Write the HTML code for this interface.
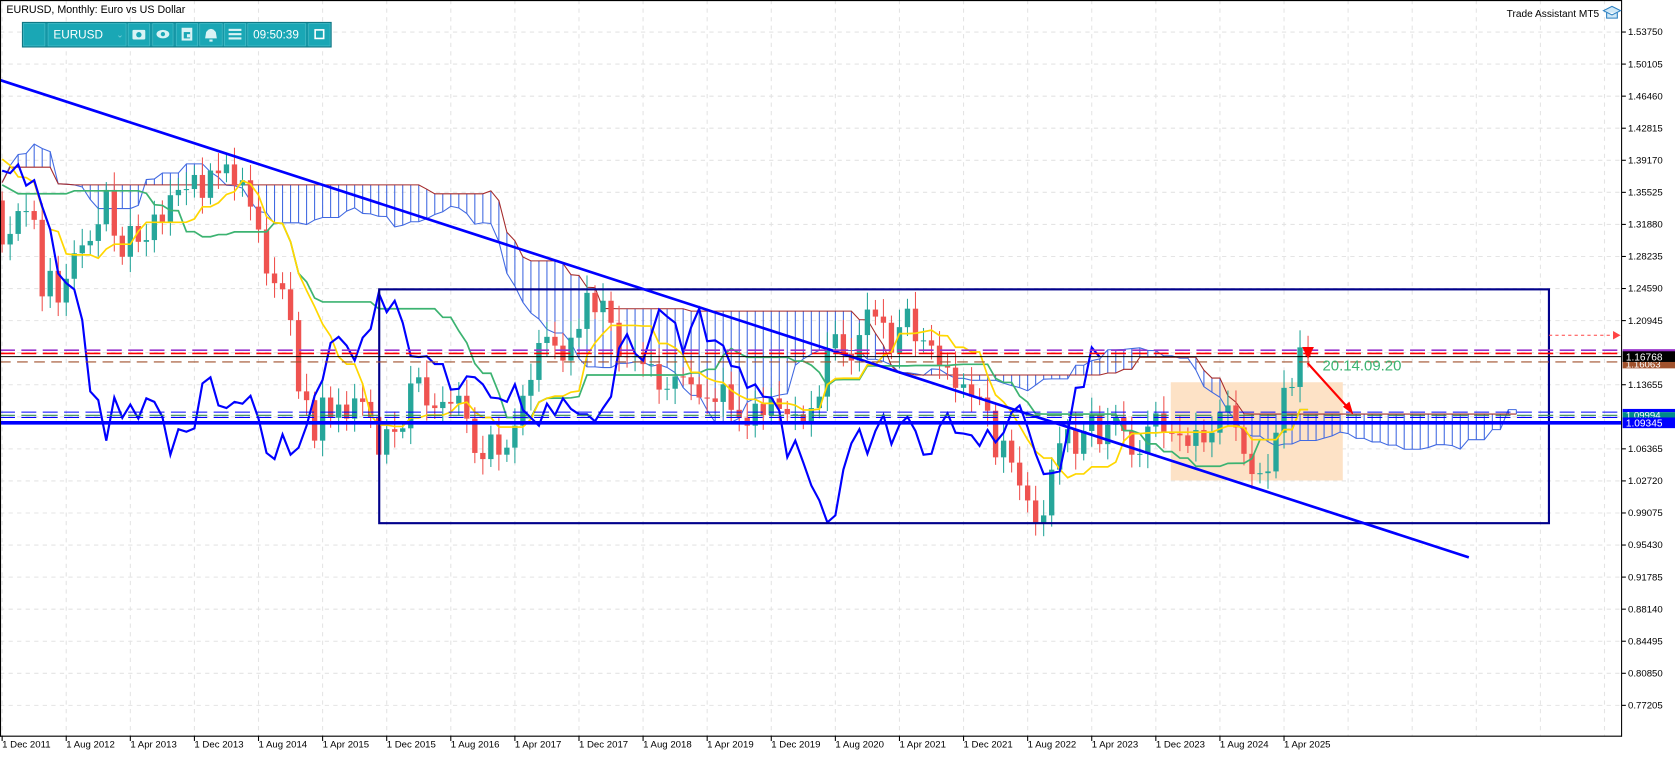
<!DOCTYPE html>
<html><head><meta charset="utf-8"><style>
html,body{margin:0;padding:0;background:#fff;overflow:hidden}
svg{display:block}
text{font-family:"Liberation Sans",sans-serif}
</style></head><body>
<svg id="s" width="1675" height="757" viewBox="0 0 1568 709" preserveAspectRatio="none" xmlns="http://www.w3.org/2000/svg">
<rect width="1568" height="709" fill="#fff"/>
<g id="grid"></g>
<rect x="1096" y="358" width="161" height="92" fill="#fde2c6"/>
<g id="cloud"></g>
<g id="cand"></g>
<g id="lines"></g>
<rect x="355" y="271" width="1095" height="219" fill="none" stroke="#00008b" stroke-width="2"/>
<line x1="0" y1="75" x2="1375" y2="522" stroke="#0000ff" stroke-width="2.5"/>
<line x1="0" y1="328" x2="1518" y2="328" stroke="#9933cc" stroke-width="1.5" stroke-dasharray="14,6"/>
<line x1="0" y1="331" x2="1518" y2="331" stroke="#ff0000" stroke-width="1.5" stroke-dasharray="14,6"/>
<line x1="0" y1="334" x2="1518" y2="334" stroke="#000" stroke-width="1"/>
<line x1="0" y1="339" x2="1518" y2="339" stroke="#a0522d" stroke-width="1" stroke-dasharray="10,6"/>
<line x1="1450" y1="314" x2="1515" y2="314" stroke="#ff4444" stroke-width="1" stroke-dasharray="3,3"/>
<path d="M1510 310 L1517 314 L1510 318Z" fill="#ff4444"/>
<line x1="0" y1="386" x2="1518" y2="386" stroke="#0000ff" stroke-width="1" stroke-dasharray="14,6"/>
<line x1="0" y1="389" x2="1518" y2="389" stroke="#2e8b57" stroke-width="1" stroke-dasharray="14,6"/>
<line x1="0" y1="391" x2="1518" y2="391" stroke="#0000ff" stroke-width="1" stroke-dasharray="14,6"/>
<line x1="0" y1="396" x2="1518" y2="396" stroke="#0000ff" stroke-width="3.5"/>
<path d="M1219 325 L1230 325 L1224.5 336Z" fill="#ff0000"/>
<line x1="1224" y1="340" x2="1262" y2="382" stroke="#ff0000" stroke-width="2"/>
<path d="M1258 381 L1266 387 L1263 377Z" fill="#ff0000" stroke="#ff0000"/>
<text x="1238" y="347" font-size="14" fill="#3cb371">20.14.09.20</text>
<line x1="1518" y1="0" x2="1518" y2="690" stroke="#000" stroke-width="1"/>
<line x1="0" y1="689.5" x2="1518" y2="689.5" stroke="#000" stroke-width="1"/>
<line x1="0.5" y1="0" x2="0.5" y2="690" stroke="#000" stroke-width="1"/>
<line x1="0" y1="0.5" x2="1518" y2="0.5" stroke="#000" stroke-width="1"/>
<g id="axis" font-size="9" fill="#000"></g>
<rect x="1519" y="327" width="49" height="3" fill="#9933cc"/>
<rect x="1519" y="338" width="49" height="7" fill="#a0522d"/>
<text x="1522" y="344" font-size="9" fill="#fff">1.16063</text>
<rect x="1519" y="329" width="49" height="10" fill="#000"/>
<text x="1522" y="337.5" font-size="9.5" fill="#fff">1.16768</text>
<rect x="1519" y="383" width="49" height="3" fill="#0000ff"/>
<rect x="1519" y="386" width="49" height="7" fill="#008b8b"/>
<text x="1522" y="392" font-size="9" fill="#fff">1.09994</text>
<rect x="1519" y="391" width="49" height="10" fill="#0000ff"/>
<text x="1522" y="399.5" font-size="9.5" fill="#fff">1.09345</text>
<text x="6" y="12" font-size="10" fill="#000">EURUSD, Monthly:  Euro vs US Dollar</text>
<text x="1497" y="16" font-size="9.5" fill="#000" text-anchor="end">Trade Assistant MT5</text>
<path d="M1501 10 L1509 6 L1517 10 L1509 14Z M1504 12 L1504 17 L1514 17 L1514 12" fill="#cfe8f7" stroke="#2a7fc1" stroke-width="1"/>
<rect x="21" y="21" width="289" height="23" fill="#1596a5" stroke="#0f7683"/>
<g fill="#1aa7b5" stroke="#4cc0cb" stroke-width="0.6">
<rect x="22" y="22" width="20" height="21"/><rect x="45" y="22" width="73" height="21"/>
<rect x="120" y="22" width="20" height="21"/><rect x="143" y="22" width="19" height="21"/>
<rect x="165" y="22" width="20" height="21"/><rect x="187" y="22" width="21" height="21"/>
<rect x="210" y="22" width="20" height="21"/><rect x="232" y="22" width="54" height="21"/>
<rect x="289" y="22" width="20" height="21"/>
</g>
<text x="50" y="36" font-size="11" fill="#fff">EURUSD</text>
<text x="109" y="35" font-size="8" fill="#7fd3db">⌄</text>
<rect x="124" y="28" width="12" height="9" rx="1" fill="#d9f3f5"/><circle cx="130" cy="32.5" r="2.5" fill="#1aa7b5"/>
<ellipse cx="152.5" cy="32" rx="6" ry="4" fill="#d9f3f5"/><circle cx="152.5" cy="32" r="2" fill="#1aa7b5"/>
<rect x="170" y="26" width="10" height="12" fill="#d9f3f5"/><rect x="172" y="30" width="6" height="6" fill="#1aa7b5"/><rect x="175" y="32" width="3" height="3" fill="#d9f3f5"/>
<path d="M192 36 L193 30 Q197.5 24 202 30 L203 36Z" fill="#d9f3f5"/><rect x="196" y="37" width="3" height="2" fill="#d9f3f5"/>
<rect x="214" y="27" width="12" height="2" fill="#d9f3f5"/><rect x="214" y="31" width="12" height="2" fill="#d9f3f5"/><rect x="214" y="35" width="12" height="2" fill="#d9f3f5"/>
<text x="237" y="36" font-size="11" fill="#fff">09:50:39</text>
<rect x="295" y="28" width="8" height="8" fill="none" stroke="#fff" stroke-width="1.5"/>
</svg>
<script>
(function(){
var NS="http://www.w3.org/2000/svg";
function el(p,t,a){var e=document.createElementNS(NS,t);for(var k in a)e.setAttribute(k,a[k]);p.appendChild(e);return e;}
function Y(p){return 30+(1.5375-p)/0.03645*30.03;}
var g=document.getElementById('grid'),ax=document.getElementById('axis');
var prices=[1.53750,1.50105,1.46460,1.42815,1.39170,1.35525,1.31880,1.28235,1.24590,1.20945,1.13655,1.06365,1.02720,0.99075,0.95430,0.91785,0.88140,0.84495,0.80850,0.77205];
for(var p=1.5375;p>0.75;p-=0.03645){var y=Y(p);el(g,'line',{x1:0,y1:y,x2:1518,y2:y,stroke:'#e4e4e4','stroke-dasharray':'4,4'});}
prices.forEach(function(p){var y=Y(p);el(ax,'line',{x1:1518,y1:y,x2:1522,y2:y,stroke:'#000'});var t=el(ax,'text',{x:1524,y:y+3});t.textContent=p.toFixed(5);});
var dates=["1 Dec 2011","1 Aug 2012","1 Apr 2013","1 Dec 2013","1 Aug 2014","1 Apr 2015","1 Dec 2015","1 Aug 2016","1 Apr 2017","1 Dec 2017","1 Aug 2018","1 Apr 2019","1 Dec 2019","1 Aug 2020","1 Apr 2021","1 Dec 2021","1 Aug 2022","1 Apr 2023","1 Dec 2023","1 Aug 2024","1 Apr 2025"];
for(var i=0;i<26;i++){var x=2+i*60;el(g,'line',{x1:x,y1:0,x2:x,y2:689,stroke:'#e4e4e4','stroke-dasharray':'4,4'});}
dates.forEach(function(d,i){var x=2+i*60;el(ax,'line',{x1:x,y1:689,x2:x,y2:694,stroke:'#000'});var t=el(ax,'text',{x:x,y:700});t.textContent=d;});
var pre=[1.281,1.266,1.325,1.323,1.414,1.403,1.425,1.433,1.463,1.472,1.500,1.433,
1.386,1.362,1.351,1.330,1.227,1.223,1.305,1.268,1.363,1.393,1.300,1.338,
1.369,1.381,1.416,1.480,1.439,1.450,1.439,1.436,1.340,1.387,1.346];
var P=pre.length;
var c=pre.concat([1.296,1.308,1.334,1.334,1.324,1.237,1.266,1.230,1.257,1.286,1.295,1.300,1.319,
1.358,1.306,1.282,1.317,1.299,1.301,1.330,1.322,1.352,1.358,1.359,1.375,
1.349,1.380,1.377,1.387,1.363,1.369,1.339,1.313,1.263,1.252,1.245,1.210,
1.129,1.119,1.073,1.122,1.099,1.114,1.098,1.121,1.117,1.100,1.057,1.086,
1.083,1.087,1.138,1.145,1.113,1.110,1.117,1.115,1.124,1.098,1.059,1.052,
1.080,1.057,1.065,1.090,1.124,1.142,1.184,1.191,1.181,1.164,1.190,1.200,
1.241,1.219,1.232,1.207,1.169,1.168,1.169,1.160,1.160,1.131,1.132,1.146,
1.145,1.137,1.122,1.121,1.117,1.137,1.108,1.099,1.090,1.115,1.102,1.121,
1.109,1.103,1.103,1.095,1.110,1.123,1.178,1.194,1.172,1.164,1.193,1.222,
1.214,1.207,1.173,1.202,1.223,1.186,1.187,1.181,1.158,1.156,1.133,1.137,
1.123,1.122,1.107,1.054,1.073,1.048,1.022,1.005,0.980,0.988,1.040,1.070,
1.086,1.058,1.084,1.102,1.069,1.091,1.100,1.084,1.057,1.058,1.089,1.104,
1.082,1.081,1.079,1.067,1.085,1.071,1.082,1.105,1.113,1.088,1.058,1.035,
1.036,1.038,1.082,1.133,1.134,1.179,1.168]);
function X(i){return 2+(i-P)*7.5;}
var n=c.length,O=[],H=[],L=[];
for(var i=0;i<n;i++){var o=i?c[i-1]:1.33;O.push(o);var s=0.008+0.012*Math.abs(Math.sin(i*1.7));H.push(Math.max(o,c[i])+s);L.push(Math.min(o,c[i])-s*0.9);}
function hl(i,k){var h=-1,l=9;for(var j=Math.max(0,i-k+1);j<=i;j++){h=Math.max(h,H[j]);l=Math.min(l,L[j]);}return (h+l)/2;}
var T=[],K=[],A=[],B=[];
for(var i=0;i<n;i++){T.push(hl(i,9));K.push(hl(i,26));A.push((T[i]+K[i])/2);B.push(hl(i,52));}
var cl=document.getElementById('cloud');
var pa='',pb='';
for(var i=0;i<n;i++){var x=X(i+26);if(x<0)continue;if(x>1440)break;var ya=Y(A[i]),yb=Y(B[i]);
el(cl,'line',{x1:x,y1:ya,x2:x,y2:yb,stroke:'#4169e1','stroke-width':1});
pa+=(pa?'L':'M')+x+' '+ya;pb+=(pb?'L':'M')+x+' '+yb;}
el(cl,'path',{d:pa,fill:'none',stroke:'#4169e1','stroke-width':1});
el(cl,'path',{d:pb,fill:'none',stroke:'#a52a2a','stroke-width':1});
var cg=document.getElementById('cand');
for(var i=P;i<n;i++){var x=X(i),up=c[i]>=O[i],col=up?'#26a69a':'#ef5350';
el(cg,'line',{x1:x,y1:Y(H[i]),x2:x,y2:Y(L[i]),stroke:col,'stroke-width':1});
var t=Y(Math.max(c[i],O[i])),b=Y(Math.min(c[i],O[i]));el(cg,'rect',{x:x-2.5,y:t,width:5,height:Math.max(1,b-t),fill:col});}
var lg=document.getElementById('lines');
function line(arr,col,w,sh){var d='';for(var i=0;i<n;i++){var x=X(i-(sh||0));if(x<0)continue;d+=(d?'L':'M')+x.toFixed(1)+' '+Y(arr[i]).toFixed(1);}el(lg,'path',{d:d,fill:'none',stroke:col,'stroke-width':w});}
line(K,'#3cb371',1.6);line(T,'#ffd700',1.6);line(c,'#0000ff',2,26);
})();
</script>
</body></html>
